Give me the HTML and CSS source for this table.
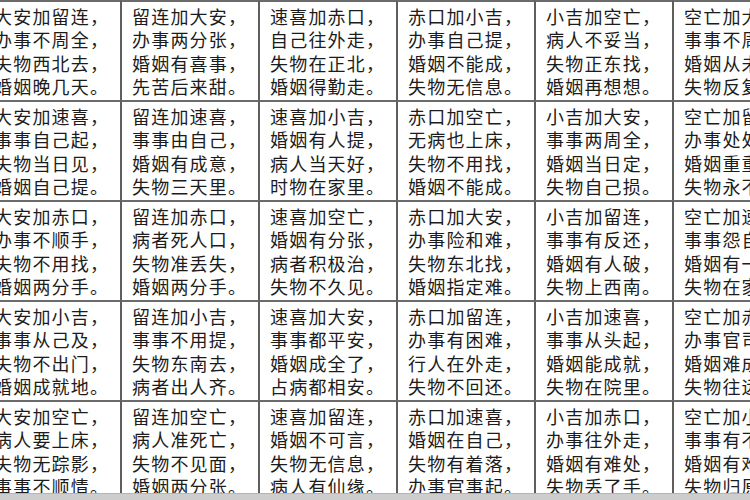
FILE: index.html
```html
<!DOCTYPE html>
<html lang="zh">
<head>
<meta charset="utf-8">
<title>小六壬</title>
<link rel="stylesheet" href="styles.css">
</head>
<body>
<div class="sheet">
  <div class="table">
    <div class="cell"><span>大安加留连，</span><span>办事不周全，</span><span>失物西北去，</span><span>婚姻晚几天。</span></div>
    <div class="cell"><span>留连加大安，</span><span>办事两分张，</span><span>婚姻有喜事，</span><span>先苦后来甜。</span></div>
    <div class="cell"><span>速喜加赤口，</span><span>自己往外走，</span><span>失物在正北，</span><span>婚姻得勤走。</span></div>
    <div class="cell"><span>赤口加小吉，</span><span>办事自己提，</span><span>婚姻不能成，</span><span>失物无信息。</span></div>
    <div class="cell"><span>小吉加空亡，</span><span>病人不妥当，</span><span>失物正东找，</span><span>婚姻再想想。</span></div>
    <div class="cell"><span>空亡加大安，</span><span>事事不周全，</span><span>婚姻从未成，</span><span>失物反复寻。</span></div>

    <div class="cell"><span>大安加速喜，</span><span>事事自己起，</span><span>失物当日见，</span><span>婚姻自己提。</span></div>
    <div class="cell"><span>留连加速喜，</span><span>事事由自己，</span><span>婚姻有成意，</span><span>失物三天里。</span></div>
    <div class="cell"><span>速喜加小吉，</span><span>婚姻有人提，</span><span>病人当天好，</span><span>时物在家里。</span></div>
    <div class="cell"><span>赤口加空亡，</span><span>无病也上床，</span><span>失物不用找，</span><span>婚姻不能成。</span></div>
    <div class="cell"><span>小吉加大安，</span><span>事事两周全，</span><span>婚姻当日定，</span><span>失物自己损。</span></div>
    <div class="cell"><span>空亡加留连，</span><span>办事处处难，</span><span>婚姻重重阻，</span><span>失物永不见。</span></div>

    <div class="cell"><span>大安加赤口，</span><span>办事不顺手，</span><span>失物不用找，</span><span>婚姻两分手。</span></div>
    <div class="cell"><span>留连加赤口，</span><span>病者死人口，</span><span>失物准丢失，</span><span>婚姻两分手。</span></div>
    <div class="cell"><span>速喜加空亡，</span><span>婚姻有分张，</span><span>病者积极治，</span><span>失物不久见。</span></div>
    <div class="cell"><span>赤口加大安，</span><span>办事险和难，</span><span>失物东北找，</span><span>婚姻指定难。</span></div>
    <div class="cell"><span>小吉加留连，</span><span>事事有反还，</span><span>婚姻有人破，</span><span>失物上西南。</span></div>
    <div class="cell"><span>空亡加速喜，</span><span>事事怨自己，</span><span>婚姻有一喜，</span><span>失物在家里。</span></div>

    <div class="cell"><span>大安加小吉，</span><span>事事从己及，</span><span>失物不出门，</span><span>婚姻成就地。</span></div>
    <div class="cell"><span>留连加小吉，</span><span>事事不用提，</span><span>失物东南去，</span><span>病者出人齐。</span></div>
    <div class="cell"><span>速喜加大安，</span><span>事事都平安，</span><span>婚姻成全了，</span><span>占病都相安。</span></div>
    <div class="cell"><span>赤口加留连，</span><span>办事有困难，</span><span>行人在外走，</span><span>失物不回还。</span></div>
    <div class="cell"><span>小吉加速喜，</span><span>事事从头起，</span><span>婚姻能成就，</span><span>失物在院里。</span></div>
    <div class="cell"><span>空亡加赤口，</span><span>办事官司有，</span><span>婚姻难成就，</span><span>失物往远走。</span></div>

    <div class="cell"><span>大安加空亡，</span><span>病人要上床，</span><span>失物无踪影，</span><span>事事不顺情。</span></div>
    <div class="cell"><span>留连加空亡，</span><span>病人准死亡，</span><span>失物不见面，</span><span>婚姻两分张。</span></div>
    <div class="cell"><span>速喜加留连，</span><span>婚姻不可言，</span><span>失物无信息，</span><span>病人有仙缘。</span></div>
    <div class="cell"><span>赤口加速喜，</span><span>婚姻在自己，</span><span>失物有着落，</span><span>办事官事起。</span></div>
    <div class="cell"><span>小吉加赤口，</span><span>办事往外走，</span><span>婚姻有难处，</span><span>失物丢了手。</span></div>
    <div class="cell"><span>空亡加小吉，</span><span>事事有不利，</span><span>婚姻有难处，</span><span>失物归原地。</span></div>
  </div>
  <div class="band"></div>
</div>
</body>
</html>
```

FILE: styles.css
```css
html, body {
  margin: 0;
  padding: 0;
  width: 750px;
  height: 500px;
  overflow: hidden;
  background: #ffffff;
}

.sheet {
  width: 750px;
  height: 500px;
  overflow: hidden;
  display: flex;
  flex-direction: column;
}

.table {
  display: grid;
  grid-template-columns: repeat(6, 138px);
  grid-template-rows: repeat(4, 100px) 93px;
  margin-left: -18px;
  width: 828px;
  flex: none;
}

.cell {
  box-sizing: border-box;
  border-top: 2px solid #6b6b6b;
  border-left: 2px solid #5e5e5e;
  padding: 3px 0 0 10px;
  overflow: hidden;
  white-space: nowrap;
  font-family: "Noto Sans CJK SC", "Noto Sans", sans-serif;
  font-size: 18px;
  line-height: 23.4px;
  letter-spacing: 1.2px;
  color: #1c1c1c;
  display: flex;
  flex-direction: column;
}

.cell span {
  display: block;
}

.band {
  flex: none;
  height: 7px;
  background: #cdcdcd;
  border-top: 1px solid #b5b5b5;
}
```
